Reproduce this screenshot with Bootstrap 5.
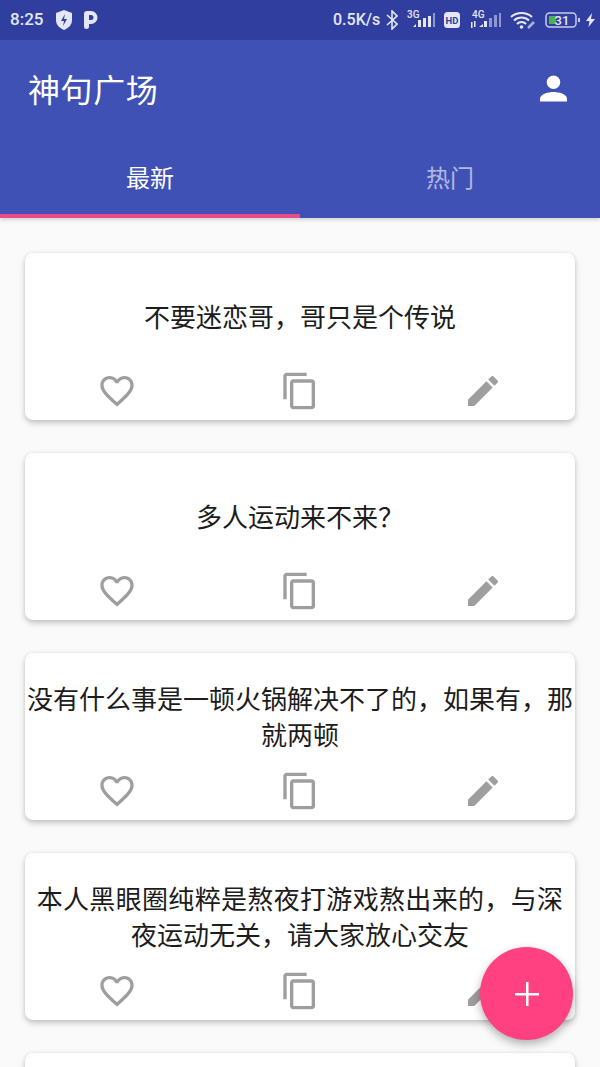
<!DOCTYPE html>
<html lang="zh">
<head>
<meta charset="utf-8">
<title>神句广场</title>
<link href="https://cdn.jsdelivr.net/npm/bootstrap@5.3.0/dist/css/bootstrap.min.css" rel="stylesheet">
<style>
html,body{height:1067px;overflow:hidden;}
body{background:#fafafa;font-family:"Roboto","Noto Sans CJK SC",sans-serif;color:#212121;}
.app-screen{width:600px;height:1067px;overflow:hidden;position:relative;}
.status-strip{height:40px;background:#303f9f;color:#e4e7f6;padding:0 5px 0 10px;}
.status-time{font-size:17px;font-weight:500;width:36px;}
.status-speed{font-size:16px;font-weight:500;line-height:1;width:49px;}
.gap-net{margin-left:10px;}
.gap-bolt{margin-left:5px;}
.title-bar{height:100px;background:#3f51b5;padding:0 33px 4px 28px;}
.title-text{font-family:"Noto Sans CJK SC",sans-serif;font-size:32px;line-height:1;color:#fff;letter-spacing:.6px;}
.tab-bar{height:78px;background:#3f51b5;box-shadow:0 2px 4px rgba(0,0,0,.16);position:relative;}
.tab-item{flex:1 1 0;height:78px;font-family:"Noto Sans CJK SC",sans-serif;font-size:24px;padding:0 0 4px;background:none;border:0;color:rgba(255,255,255,.6);}
.tab-item.is-current{color:#fff;padding-bottom:0;border-bottom:4px solid #e94c8b;}
.feed{padding:35px 25px 0;display:flex;flex-direction:column;gap:33px;}
.quote-card{height:167px;border:0;border-radius:8px;background:#fff;box-shadow:0 3px 6px rgba(0,0,0,.22),0 0 3px rgba(0,0,0,.08);flex:none;}
.quote-body{height:113px;padding:12px 0 0;font-family:"Noto Sans CJK SC",sans-serif;font-size:26px;line-height:36px;color:#1c1c1c;text-align:center;}
.quote-line-wide{letter-spacing:.33px;}
.quote-tools{height:54px;padding-bottom:4px;}
.tool-slot{flex:1 1 0;}
.tool-icon{width:40px;height:40px;fill:#9e9e9e;}
.fab-add{position:absolute;left:480px;top:947px;width:93px;height:93px;border-radius:50%;background:#ff4081;border:0;box-shadow:0 4px 10px rgba(0,0,0,.3);padding:0;}
</style>
</head>
<body>
<svg width="0" height="0" class="d-none" aria-hidden="true">
  <symbol id="i-heart" viewBox="0 0 24 24"><path d="M16.500 3c-1.740 0-3.410.81-4.500 2.090C10.910 3.810 9.240 3 7.500 3 4.420 3 2 5.420 2 8.500c0 3.780 3.400 6.860 8.550 11.540L12 21.350l1.450-1.320C18.600 15.360 22 12.280 22 8.500 22 5.420 19.580 3 16.500 3zm-4.400 15.550l-.1.100-.1-.1C7.140 14.240 4 11.390 4 8.500 4 6.500 5.500 5 7.500 5c1.540 0 3.040.99 3.570 2.360h1.870C13.460 5.990 14.960 5 16.500 5c2 0 3.500 1.500 3.500 3.500 0 2.890-3.140 5.740-7.900 10.050z"/></symbol>
  <symbol id="i-copy" viewBox="0 0 24 24"><path d="M16 1H4c-1.100 0-2 .9-2 2v14h2V3h12V1zm3 4H8c-1.100 0-2 .9-2 2v14c0 1.100.9 2 2 2h11c1.100 0 2-.9 2-2V7c0-1.100-.9-2-2-2zm0 16H8V7h11v14z"/></symbol>
  <symbol id="i-pen" viewBox="0 0 24 24"><path d="M3 17.250V21h3.750L17.810 9.940l-3.750-3.750L3 17.250zM20.710 7.040a1 1 0 0 0 0-1.410l-2.340-2.340a1 1 0 0 0-1.410 0l-1.830 1.830 3.750 3.750 1.830-1.830z"/></symbol>
</svg>
<div class="app-screen">
  <div class="status-strip d-flex align-items-center">
    <span class="status-time">8:25</span>
    <svg class="ms-2" width="20" height="22" viewBox="0 0 20 22" aria-hidden="true"><path d="M10 1l8 3v7c0 5-3.500 8-8 10-4.500-2-8-5-8-10V4z" fill="#e4e7f6"/><path d="M11 5l-4 7h3l-1 5 4-7h-3z" fill="#303f9f"/></svg>
    <svg class="ms-2" width="18" height="20" viewBox="0 0 18 20" aria-hidden="true"><path d="M2 4q0-3 3-3h4a6.500 6.500 0 0 1 0 13H7v3q0 2-2.500 2T2 17zM7 5v5h2a2.500 2.500 0 0 0 0-5z" fill="#e4e7f6" fill-rule="evenodd"/></svg>
    <div class="ms-auto d-flex align-items-center">
      <span class="status-speed">0.5K/s</span>
      <svg class="ms-1" width="12" height="20" viewBox="0 0 12 20" aria-hidden="true"><path d="M1 5l10 9-5 5V1l5 5-10 9" fill="none" stroke="#e4e7f6" stroke-width="1.600"/></svg>
      <svg class="ms-2" width="30" height="22" viewBox="0 0 30 22" aria-hidden="true"><text x="1" y="9" font-size="10" font-family="Roboto" font-weight="500" fill="#e4e7f6">3G</text><path d="M7 18h3v-3zM12 18h3v-7h-3zM17 18h3V9h-3zM22 18h3V7h-3z" fill="#e4e7f6"/><path d="M27 18h2V4h-2z" fill="#8e98cf"/></svg>
      <svg class="ms-2" width="16" height="16" viewBox="0 0 16 16" aria-hidden="true"><rect width="16" height="16" rx="3.500" fill="#e4e7f6"/><text x="8" y="11.500" text-anchor="middle" font-size="9.500" font-weight="700" font-family="Roboto" fill="#303f9f">HD</text></svg>
      <svg class="gap-net" width="32" height="22" viewBox="0 0 32 22" aria-hidden="true"><text x="2" y="9" font-size="10" font-family="Roboto" font-weight="500" fill="#e4e7f6">4G</text><path d="M1 13h1.500v6H1zM4 12h1.500v6H4zM9 18h4v-3zM14 18h3v-6h-3z" fill="#e4e7f6"/><path d="M19 18h3V9h-3zM24 18h3V6h-3zM29 18h2V4h-2z" fill="#8e98cf"/></svg>
      <svg class="ms-2" width="27" height="20" viewBox="0 0 27 20" aria-hidden="true"><path d="M1 7a16 16 0 0 1 21 0M4 10.500a11 11 0 0 1 15 0M7 14a6 6 0 0 1 9 0" fill="none" stroke="#e4e7f6" stroke-width="2"/><circle cx="11.500" cy="17" r="1.800" fill="#e4e7f6"/><path d="M18 18l6-6" stroke="#aab2de" stroke-width="2.500"/></svg>
      <svg class="ms-2" width="36" height="16" viewBox="0 0 36 16" aria-hidden="true"><rect x="1" y="1" width="30" height="14" rx="3.500" fill="none" stroke="#c7cceb" stroke-width="1.500"/><rect x="4" y="4" width="7" height="8" fill="#4caf50"/><text x="17" y="12.500" text-anchor="middle" font-size="13" font-weight="500" font-family="Roboto" fill="#e4e7f6">31</text><rect x="33" y="6" width="2" height="4" fill="#c7cceb"/></svg>
      <svg class="gap-bolt" width="9" height="14" viewBox="0 0 9 14" aria-hidden="true"><path d="M6 0L0 8h3.500L2.500 14 9 6H5z" fill="#e4e7f6"/></svg>
    </div>
  </div>
  <div class="title-bar d-flex align-items-center justify-content-between">
    <span class="title-text">神句广场</span>
    <svg width="27" height="27" viewBox="0 0 28 28" aria-hidden="true"><circle cx="14" cy="7.500" r="7" fill="#fff"/><path d="M0 27.500v-3c0-5 9-7 14-7s14 2 14 7v3z" fill="#fff"/></svg>
  </div>
  <div class="tab-bar d-flex">
    <button class="tab-item is-current" type="button">最新</button>
    <button class="tab-item" type="button">热门</button>
  </div>
  <div class="feed">
    <div class="card quote-card">
      <div class="quote-body d-flex align-items-center justify-content-center"><span>不要迷恋哥，哥只是个传说</span></div>
      <div class="quote-tools d-flex align-items-center">
        <div class="tool-slot d-flex justify-content-center"><svg class="tool-icon"><use href="#i-heart"/></svg></div>
        <div class="tool-slot d-flex justify-content-center"><svg class="tool-icon"><use href="#i-copy"/></svg></div>
        <div class="tool-slot d-flex justify-content-center"><svg class="tool-icon"><use href="#i-pen"/></svg></div>
      </div>
    </div>
    <div class="card quote-card">
      <div class="quote-body d-flex align-items-center justify-content-center"><span>多人运动来不来？</span></div>
      <div class="quote-tools d-flex align-items-center">
        <div class="tool-slot d-flex justify-content-center"><svg class="tool-icon"><use href="#i-heart"/></svg></div>
        <div class="tool-slot d-flex justify-content-center"><svg class="tool-icon"><use href="#i-copy"/></svg></div>
        <div class="tool-slot d-flex justify-content-center"><svg class="tool-icon"><use href="#i-pen"/></svg></div>
      </div>
    </div>
    <div class="card quote-card">
      <div class="quote-body d-flex align-items-center justify-content-center"><span>没有什么事是一顿火锅解决不了的，如果有，那<br>就两顿</span></div>
      <div class="quote-tools d-flex align-items-center">
        <div class="tool-slot d-flex justify-content-center"><svg class="tool-icon"><use href="#i-heart"/></svg></div>
        <div class="tool-slot d-flex justify-content-center"><svg class="tool-icon"><use href="#i-copy"/></svg></div>
        <div class="tool-slot d-flex justify-content-center"><svg class="tool-icon"><use href="#i-pen"/></svg></div>
      </div>
    </div>
    <div class="card quote-card">
      <div class="quote-body d-flex align-items-center justify-content-center"><span><span class="quote-line-wide">本人黑眼圈纯粹是熬夜打游戏熬出来的，与深</span><br>夜运动无关，请大家放心交友</span></div>
      <div class="quote-tools d-flex align-items-center">
        <div class="tool-slot d-flex justify-content-center"><svg class="tool-icon"><use href="#i-heart"/></svg></div>
        <div class="tool-slot d-flex justify-content-center"><svg class="tool-icon"><use href="#i-copy"/></svg></div>
        <div class="tool-slot d-flex justify-content-center"><svg class="tool-icon"><use href="#i-pen"/></svg></div>
      </div>
    </div>
    <div class="card quote-card"></div>
  </div>
  <button class="fab-add d-flex align-items-center justify-content-center" type="button" aria-label="add"><svg width="24" height="24" viewBox="0 0 24 24"><path d="M11 0h2.500v11H24v2.500H13.500V24H11V13.500H0V11h11z" fill="#fff"/></svg></button>
</div>
<script src="https://cdn.jsdelivr.net/npm/bootstrap@5.3.0/dist/js/bootstrap.bundle.min.js"></script>
</body>
</html>
